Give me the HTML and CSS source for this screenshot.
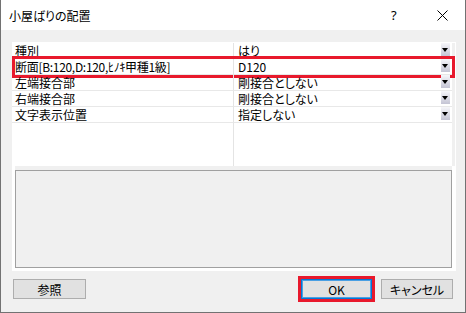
FILE: index.html
```html
<!DOCTYPE html>
<html lang="ja">
<head>
  <meta charset="UTF-8" />
  <title>小屋ばりの配置</title>
  <link rel="stylesheet" href="styles.css">
</head>
<body>
  <div class="window">
    <div class="titlebar">
      <span class="title">小屋ばりの配置</span>
      <span class="help">?</span>
      <span class="close">
        <svg width="11" height="11" viewBox="0 0 11 11">
          <path d="M0.5 0.5 L10.5 10.5 M10.5 0.5 L0.5 10.5" stroke="#000" stroke-width="1" fill="none" />
        </svg>
      </span>
    </div>

    <div class="panel">
      <div class="grid">
        <div class="row">
          <div class="cell name">種別</div>
          <div class="cell value">はり<span class="drop"></span></div>
        </div>
        <div class="row marked">
          <div class="cell name narrow">断面[B:120,D:120,ﾋﾉｷ甲種1級]</div>
          <div class="cell value">D120<span class="drop"></span></div>
        </div>
        <div class="row">
          <div class="cell name">左端接合部</div>
          <div class="cell value">剛接合としない<span class="drop"></span></div>
        </div>
        <div class="row">
          <div class="cell name">右端接合部</div>
          <div class="cell value">剛接合としない<span class="drop"></span></div>
        </div>
        <div class="row">
          <div class="cell name">文字表示位置</div>
          <div class="cell value">指定しない<span class="drop"></span></div>
        </div>
        <div class="row filler">
          <div class="cell name"></div>
          <div class="cell value"></div>
        </div>
      </div>
      <div class="desc-wrap">
        <div class="desc"></div>
      </div>
    </div>

    <div class="buttons">
      <button class="btn">参照</button>
      <div class="right">
        <button class="btn ok">OK</button>
        <button class="btn">キャンセル</button>
      </div>
    </div>
  </div>
</body>
</html>
```

FILE: styles.css
```css
* { box-sizing: border-box; }
body {
  margin: 0;
  background: #f0f0f0;
  font-family: "Noto Sans CJK JP", "Noto Sans", sans-serif;
  font-size: 12px;
  color: #000;
}
.window {
  width: 466px;
  height: 313px;
  background: #f0f0f0;
  border-left: 1px solid #727272;
  border-right: 1px solid #727272;
  border-bottom: 1px solid #727272;
  display: flex;
  flex-direction: column;
}
.titlebar {
  height: 30px;
  background: #fff;
  display: flex;
  align-items: center;
  padding-left: 8px;
}
.title {
  flex: 1;
  font-feature-settings: "palt";
  line-height: 30px;
  padding-top: 1px;
}
.help {
  width: 10px;
  font-family: "Noto Sans", sans-serif;
  font-size: 13px;
  margin-right: 36px;
}
.close {
  display: flex;
  margin-right: 17px;
}
.panel {
  margin: 12px 0 0 11px;
  width: 444px;
  height: 229px;
  background: #fff;
  padding: 1px 1px 3px 0;
  display: flex;
  flex-direction: column;
}
.grid {
  width: 443px;
  height: 123px;
  border-right: 3px solid #f0f0f0;
  display: flex;
  flex-direction: column;
}
.row {
  display: flex;
  height: 16px;
  position: relative;
}
.row.filler { flex: 1; }
.cell {
  height: 100%;
  line-height: 15px;
  white-space: nowrap;
  font-feature-settings: "palt";
}
.name {
  width: 222px;
  padding-left: 3px;
  border-bottom: 1px solid #e8e8e8;
  border-right: 1px solid #e4e4e4;
}
.name.narrow { letter-spacing: -0.3px; }
.value {
  flex: 1;
  padding-left: 4px;
  border-bottom: 1px solid #e8e8e8;
  display: flex;
  justify-content: space-between;
}
.filler .cell { border-bottom: none; }
.drop {
  width: 9px;
  height: 13px;
  margin: 0 2px 0 0;
  background: linear-gradient(#f6f6fa, #c4c4d4);
  position: relative;
}
.drop::after {
  content: "";
  position: absolute;
  left: 1px;
  top: 5px;
  border-left: 3.5px solid transparent;
  border-right: 3.5px solid transparent;
  border-top: 4px solid #000;
}
.marked::after {
  content: "";
  position: absolute;
  left: 0;
  right: -3px;
  top: -3px;
  bottom: -3px;
  border: 3px solid #e8192c;
  pointer-events: none;
}
.desc-wrap {
  margin: 0 3px 0 3px;
  padding-top: 4px;
  background: #f0f0f0;
  flex: 1;
  display: flex;
}
.desc {
  flex: 1;
  border: 1px solid #a0a0a0;
  background: #f0f0f0;
}
.buttons {
  display: flex;
  justify-content: space-between;
  margin-top: 8px;
  padding: 0 12px 0 12px;
}
.right {
  display: flex;
  gap: 9px;
}
.btn {
  width: 73px;
  height: 20px;
  padding: 0;
  border: 1px solid #adadad;
  background: #e1e1e1;
  font-family: "Noto Sans CJK JP", "Noto Sans", sans-serif;
  font-size: 12px;
  font-feature-settings: "palt";
  color: #000;
  line-height: 17px;
}
.btn.ok {
  width: 71px;
  border: 1px solid #0078d7;
  box-shadow: inset 0 0 0 1px #4a9fe3;
  outline: 3px solid #e8192c;
}
.right .btn:last-child { width: 72px; }
```
